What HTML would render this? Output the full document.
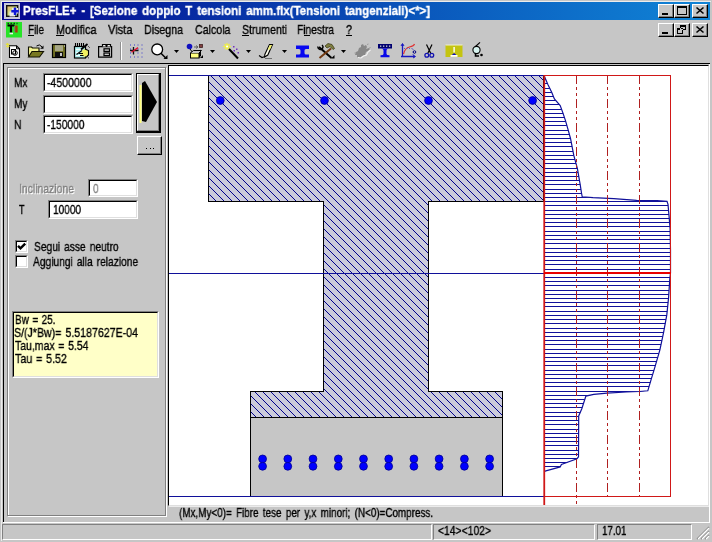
<!DOCTYPE html>
<html><head><meta charset="utf-8"><title>PresFLE+</title>
<style>
html,body{margin:0;padding:0}
body{width:712px;height:542px;position:relative;overflow:hidden;background:#c6c6c6;font-family:"Liberation Sans",sans-serif;font-size:12px}
body>div,body>span,body>svg{position:absolute;box-sizing:border-box}
.t{white-space:nowrap;transform-origin:0 0;display:block;will-change:transform;-webkit-text-stroke:0.35px currentColor}
</style></head><body>
<div style="left:1px;top:1px;width:710px;height:540px;border-left:1px solid #ececec;border-top:1px solid #ececec;"></div>
<div style="left:2px;top:2px;width:708px;height:18px;background:linear-gradient(90deg,#05058e 0%,#0a58bc 60%,#1084d6 100%);"></div>
<span class="t" style="left:23px;top:4.10px;font-size:13px;line-height:13px;font-weight:bold;color:#fff;transform:scaleX(0.8866);word-spacing:1.8px;">PresFLE+ - [Sezione doppio T tensioni amm.flx(Tensioni tangenziali)&lt;*&gt;]</span>
<div style="left:658px;top:4px;width:16px;height:14px;background:#c6c6c6;border-left:1px solid #ffffff;border-top:1px solid #ffffff;border-right:1px solid #000000;border-bottom:1px solid #000000;"></div>
<div style="left:659px;top:5px;width:14px;height:12px;border-right:1px solid #808080;border-bottom:1px solid #808080;"></div>
<div style="left:674px;top:4px;width:16px;height:14px;background:#c6c6c6;border-left:1px solid #ffffff;border-top:1px solid #ffffff;border-right:1px solid #000000;border-bottom:1px solid #000000;"></div>
<div style="left:675px;top:5px;width:14px;height:12px;border-right:1px solid #808080;border-bottom:1px solid #808080;"></div>
<div style="left:692px;top:4px;width:16px;height:14px;background:#c6c6c6;border-left:1px solid #ffffff;border-top:1px solid #ffffff;border-right:1px solid #000000;border-bottom:1px solid #000000;"></div>
<div style="left:693px;top:5px;width:14px;height:12px;border-right:1px solid #808080;border-bottom:1px solid #808080;"></div>
<div style="left:658px;top:23px;width:16px;height:14px;background:#c6c6c6;border-left:1px solid #ffffff;border-top:1px solid #ffffff;border-right:1px solid #000000;border-bottom:1px solid #000000;"></div>
<div style="left:659px;top:24px;width:14px;height:12px;border-right:1px solid #808080;border-bottom:1px solid #808080;"></div>
<div style="left:674px;top:23px;width:16px;height:14px;background:#c6c6c6;border-left:1px solid #ffffff;border-top:1px solid #ffffff;border-right:1px solid #000000;border-bottom:1px solid #000000;"></div>
<div style="left:675px;top:24px;width:14px;height:12px;border-right:1px solid #808080;border-bottom:1px solid #808080;"></div>
<div style="left:692px;top:23px;width:16px;height:14px;background:#c6c6c6;border-left:1px solid #ffffff;border-top:1px solid #ffffff;border-right:1px solid #000000;border-bottom:1px solid #000000;"></div>
<div style="left:693px;top:24px;width:14px;height:12px;border-right:1px solid #808080;border-bottom:1px solid #808080;"></div>
<svg style="left:0;top:0" width="712" height="60" shape-rendering="crispEdges">
<g fill="#000">
<rect x="662" y="13" width="6" height="2"/><rect x="662" y="32" width="6" height="2"/>
<path d="M677 6h10v9h-10z M678 8v6h8v-6z" fill-rule="evenodd"/>
<path d="M680 25h6v5h-6z M681 27v2h4v-2z M677 28h6v6h-6z M678 30v3h4v-3z" fill-rule="evenodd"/>
</g>
<g stroke="#000" stroke-width="1.6" shape-rendering="auto" fill="none">
<path d="M696.5 7.5l7 6M703.5 7.5l-7 6"/><path d="M696.5 26.5l7 6M703.5 26.5l-7 6"/>
</g></svg>
<span class="t" style="left:28px;top:22.90px;font-size:13px;line-height:13px;color:#000;transform:scaleX(0.7636);">File</span>
<span class="t" style="left:56px;top:22.90px;font-size:13px;line-height:13px;color:#000;transform:scaleX(0.8364);">Modifica</span>
<span class="t" style="left:107.5px;top:22.90px;font-size:13px;line-height:13px;color:#000;transform:scaleX(0.8545);">Vista</span>
<span class="t" style="left:143.5px;top:22.90px;font-size:13px;line-height:13px;color:#000;transform:scaleX(0.8173);">Disegna</span>
<span class="t" style="left:194.5px;top:22.90px;font-size:13px;line-height:13px;color:#000;transform:scaleX(0.8184);">Calcola</span>
<span class="t" style="left:241.5px;top:22.90px;font-size:13px;line-height:13px;color:#000;transform:scaleX(0.8088);">Strumenti</span>
<span class="t" style="left:297px;top:22.90px;font-size:13px;line-height:13px;color:#000;transform:scaleX(0.7878);">Finestra</span>
<span class="t" style="left:346px;top:22.90px;font-size:13px;line-height:13px;color:#000;transform:scaleX(0.8294);">?</span>
<div style="left:28px;top:35px;width:6px;height:1px;background:#000000;"></div>
<div style="left:56px;top:35px;width:8px;height:1px;background:#000000;"></div>
<div style="left:241.5px;top:35px;width:7px;height:1px;background:#000000;"></div>
<div style="left:304px;top:35px;width:6px;height:1px;background:#000000;"></div>
<div style="left:346px;top:35px;width:6px;height:1px;background:#000000;"></div>
<div style="left:3px;top:63px;width:707px;height:1px;background:#000000;"></div>
<div style="left:3px;top:63px;width:1px;height:459px;background:#000000;"></div>
<div style="left:709px;top:64px;width:1px;height:459px;background:#ffffff;"></div>
<div style="left:3px;top:522px;width:707px;height:1px;background:#ffffff;"></div>
<div style="left:8px;top:68px;width:159px;height:449px;border:1px solid #ffffff;"></div>
<div style="left:7px;top:67px;width:159px;height:449px;border:1px solid #808080;"></div>
<div style="left:43px;top:73px;width:90px;height:19px;background:#fff;border-left:1px solid #808080;border-top:1px solid #808080;border-right:1px solid #ffffff;border-bottom:1px solid #ffffff;"></div>
<div style="left:44px;top:74px;width:88px;height:17px;border-left:1px solid #000000;border-top:1px solid #000000;border-right:1px solid #dfdfdf;border-bottom:1px solid #dfdfdf;"></div>
<div style="left:43px;top:95px;width:90px;height:19px;background:#fff;border-left:1px solid #808080;border-top:1px solid #808080;border-right:1px solid #ffffff;border-bottom:1px solid #ffffff;"></div>
<div style="left:44px;top:96px;width:88px;height:17px;border-left:1px solid #000000;border-top:1px solid #000000;border-right:1px solid #dfdfdf;border-bottom:1px solid #dfdfdf;"></div>
<div style="left:43px;top:115px;width:90px;height:19px;background:#fff;border-left:1px solid #808080;border-top:1px solid #808080;border-right:1px solid #ffffff;border-bottom:1px solid #ffffff;"></div>
<div style="left:44px;top:116px;width:88px;height:17px;border-left:1px solid #000000;border-top:1px solid #000000;border-right:1px solid #dfdfdf;border-bottom:1px solid #dfdfdf;"></div>
<span class="t" style="left:13.5px;top:76.00px;font-size:13px;line-height:13px;color:#000;transform:scaleX(0.7791);">Mx</span>
<span class="t" style="left:13.5px;top:97.00px;font-size:13px;line-height:13px;color:#000;transform:scaleX(0.7791);">My</span>
<span class="t" style="left:13.5px;top:118.00px;font-size:13px;line-height:13px;color:#000;transform:scaleX(0.7987);">N</span>
<span class="t" style="left:47px;top:76.00px;font-size:13px;line-height:13px;color:#000;transform:scaleX(0.8096);">-4500000</span>
<span class="t" style="left:47px;top:118.00px;font-size:13px;line-height:13px;color:#000;transform:scaleX(0.7856);">-150000</span>
<div style="left:136px;top:73px;width:25px;height:60px;background:#c6c6c6;border:1px solid #000000;border-right-width:2px;border-bottom-width:2px;"></div>
<div style="left:137px;top:74px;width:22px;height:57px;border-left:1px solid #ffffff;border-top:1px solid #ffffff;border-right:1px solid #808080;border-bottom:1px solid #808080;"></div>
<svg style="left:136px;top:73px" width="26" height="60"><path d="M4.5 12V50" stroke="#ffff80" stroke-width="2"/><path d="M6 10L9 8L21 29L10 49L6 48Z" fill="#000"/></svg>
<div style="left:137px;top:136px;width:25px;height:19px;background:#c6c6c6;border-left:1px solid #ffffff;border-top:1px solid #ffffff;border-right:1px solid #000000;border-bottom:1px solid #000000;"></div>
<div style="left:138px;top:137px;width:23px;height:17px;border-right:1px solid #808080;border-bottom:1px solid #808080;"></div>
<div style="left:146px;top:147.5px;width:1.3px;height:1.5px;background:#000000;"></div>
<div style="left:149.5px;top:147.5px;width:1.3px;height:1.5px;background:#000000;"></div>
<div style="left:153px;top:147.5px;width:1.3px;height:1.5px;background:#000000;"></div>
<span class="t" style="left:19.7px;top:182.80px;font-size:13px;line-height:13px;color:#fff;transform:scaleX(0.8007);">Inclinazione</span>
<span class="t" style="left:18.7px;top:181.80px;font-size:13px;line-height:13px;color:#808080;transform:scaleX(0.8007);">Inclinazione</span>
<div style="left:88px;top:179px;width:50px;height:18px;background:#fff;border-left:1px solid #808080;border-top:1px solid #808080;border-right:1px solid #ffffff;border-bottom:1px solid #ffffff;"></div>
<div style="left:89px;top:180px;width:48px;height:16px;border-left:1px solid #000000;border-top:1px solid #000000;border-right:1px solid #dfdfdf;border-bottom:1px solid #dfdfdf;"></div>
<span class="t" style="left:92.5px;top:181.80px;font-size:13px;line-height:13px;color:#808080;transform:scaleX(0.7603);">0</span>
<span class="t" style="left:19px;top:202.60px;font-size:13px;line-height:13px;color:#000;transform:scaleX(0.6929);">T</span>
<div style="left:48px;top:200px;width:90px;height:19px;background:#fff;border-left:1px solid #808080;border-top:1px solid #808080;border-right:1px solid #ffffff;border-bottom:1px solid #ffffff;"></div>
<div style="left:49px;top:201px;width:88px;height:17px;border-left:1px solid #000000;border-top:1px solid #000000;border-right:1px solid #dfdfdf;border-bottom:1px solid #dfdfdf;"></div>
<span class="t" style="left:52.5px;top:202.60px;font-size:13px;line-height:13px;color:#000;transform:scaleX(0.7741);">10000</span>
<div style="left:15px;top:240px;width:13px;height:13px;background:#fff;border-left:1px solid #808080;border-top:1px solid #808080;border-right:1px solid #ffffff;border-bottom:1px solid #ffffff;"></div>
<div style="left:16px;top:241px;width:11px;height:11px;border-left:1px solid #000000;border-top:1px solid #000000;border-right:1px solid #dfdfdf;border-bottom:1px solid #dfdfdf;"></div>
<div style="left:15px;top:255px;width:13px;height:13px;background:#fff;border-left:1px solid #808080;border-top:1px solid #808080;border-right:1px solid #ffffff;border-bottom:1px solid #ffffff;"></div>
<div style="left:16px;top:256px;width:11px;height:11px;border-left:1px solid #000000;border-top:1px solid #000000;border-right:1px solid #dfdfdf;border-bottom:1px solid #dfdfdf;"></div>
<svg style="left:15px;top:240px" width="13" height="13"><path d="M3 5.8L5.5 8.4L10.2 3.6" stroke="#000" stroke-width="2.4" fill="none"/></svg>
<span class="t" style="left:33.5px;top:239.60px;font-size:13px;line-height:13px;color:#000;transform:scaleX(0.7855);word-spacing:1.5px;">Segui asse neutro</span>
<span class="t" style="left:33px;top:254.50px;font-size:13px;line-height:13px;color:#000;transform:scaleX(0.7858);word-spacing:1.5px;">Aggiungi alla relazione</span>
<div style="left:12px;top:311px;width:147px;height:67px;background:#ffffc8;border-left:1px solid #808080;border-top:1px solid #808080;border-right:1px solid #ffffff;border-bottom:1px solid #ffffff;"></div>
<div style="left:13px;top:312px;width:145px;height:65px;border-left:1px solid #000000;border-top:1px solid #000000;border-right:1px solid #dfdfdf;border-bottom:1px solid #dfdfdf;"></div>
<span class="t" style="left:14.6px;top:312.80px;font-size:13px;line-height:13px;color:#000;transform:scaleX(0.7648);word-spacing:1px;">Bw = 25.</span>
<span class="t" style="left:14.3px;top:325.60px;font-size:13px;line-height:13px;color:#000;transform:scaleX(0.8146);word-spacing:1.5px;">S/(J*Bw)= 5.5187627E-04</span>
<span class="t" style="left:14.6px;top:338.60px;font-size:13px;line-height:13px;color:#000;transform:scaleX(0.8053);word-spacing:1px;">Tau,max = 5.54</span>
<span class="t" style="left:14.6px;top:351.50px;font-size:13px;line-height:13px;color:#000;transform:scaleX(0.8242);word-spacing:1px;">Tau = 5.52</span>
<div style="left:168px;top:65px;width:541px;height:441px;background:#fff;border-left:1px solid #000000;border-top:1px solid #000000;border-right:1px solid #dfdfdf;border-bottom:1px solid #dfdfdf;"></div>
<div style="left:169px;top:506px;width:540px;height:1px;background:#ececec;"></div>
<span class="t" style="left:178.6px;top:507.42px;font-size:12.5px;line-height:12.5px;color:#000;transform:scaleX(0.7901);word-spacing:2px;">(Mx,My&lt;0)= Fibre tese per y,x minori; (N&lt;0)=Compress.</span>
<div style="left:2px;top:524px;width:430px;height:16px;border-left:1px solid #808080;border-top:1px solid #808080;border-right:1px solid #ffffff;border-bottom:1px solid #ffffff;"></div>
<div style="left:433px;top:524px;width:162px;height:16px;border-left:1px solid #808080;border-top:1px solid #808080;border-right:1px solid #ffffff;border-bottom:1px solid #ffffff;"></div>
<div style="left:597px;top:524px;width:95px;height:16px;border-left:1px solid #808080;border-top:1px solid #808080;border-right:1px solid #ffffff;border-bottom:1px solid #ffffff;"></div>
<span class="t" style="left:438px;top:524.40px;font-size:13px;line-height:13px;color:#000;transform:scaleX(0.7964);">&lt;14&gt;&lt;102&gt;</span>
<span class="t" style="left:602px;top:524.40px;font-size:13px;line-height:13px;color:#000;transform:scaleX(0.7528);">17.01</span>
<svg style="left:696px;top:526px" width="14" height="14"><g stroke-width="1.2"><path d="M1 13L13 1M5 13L13 5M9 13L13 9" stroke="#808080"/><path d="M2 13L13 2M6 13L13 6M10 13L13 10" stroke="#fff"/></g></svg>
<svg style="left:0;top:0" width="712" height="542">
<defs>
<pattern id="h" width="8" height="8" x="-1" patternUnits="userSpaceOnUse">
<rect width="8" height="8" fill="#cbcbdb"/>
<g fill="#00008c" shape-rendering="crispEdges"><rect x="0" y="0" width="1" height="1"/><rect x="1" y="1" width="1" height="1"/><rect x="2" y="2" width="1" height="1"/><rect x="3" y="3" width="1" height="1"/><rect x="4" y="4" width="1" height="1"/><rect x="5" y="5" width="1" height="1"/><rect x="6" y="6" width="1" height="1"/><rect x="7" y="7" width="1" height="1"/></g>
</pattern>
<clipPath id="c"><polygon points="544,75.4 547.9,84.5 551.8,92.6 554.4,99 560.2,105.5 562.8,112.6 565.4,120.4 568,129.4 570.5,138.5 573.8,155.4 577.4,168.6 580.2,184.7 581.5,193 582.2,196.8 593,197.7 613.8,198.6 636.6,200.3 657,200.7 667,201.3 668,204.4 669.1,216.6 670.1,228.8 670.5,250 670.5,273 669.8,278.7 668.6,297.4 666.8,314.9 663.6,332.3 659.9,349.8 654.9,367.2 651.1,379.7 647.8,390.8 639.4,391.5 626.2,392 607,393.2 593.8,394.4 585.9,396.1 581.8,408.8 578.7,416 578.5,456.8 577,458.7 561.4,464.5 560.2,466.9 545,471.2 544,471.4"/></clipPath>
</defs>
<g shape-rendering="crispEdges">
<rect x="250.5" y="417.5" width="252" height="79" fill="#c6c6c6"/>
<path d="M208.5 75.5H543.5V201.5H428.5V391.5H502.5V417.5H250.5V391.5H323.5V201.5H208.5Z" fill="url(#h)" stroke="#000" stroke-width="1"/>
<path d="M250.5 417.5V496.5M502.5 417.5V496.5" stroke="#000" stroke-width="1"/>
<path d="M169 75.5H544M169 273.5H544M169 496.5H544" stroke="#10109a" stroke-width="1"/>
<g clip-path="url(#c)"><path d="M544 79.5H672M544 83.5H672M544 88.5H672M544 92.5H672M544 96.5H672M544 100.5H672M544 104.5H672M544 109.5H672M544 113.5H672M544 117.5H672M544 121.5H672M544 125.5H672M544 130.5H672M544 134.5H672M544 138.5H672M544 142.5H672M544 146.5H672M544 151.5H672M544 155.5H672M544 159.5H672M544 163.5H672M544 168.5H672M544 172.5H672M544 176.5H672M544 180.5H672M544 184.5H672M544 189.5H672M544 193.5H672M544 197.5H672M544 201.5H672M544 205.5H672M544 210.5H672M544 214.5H672M544 218.5H672M544 222.5H672M544 226.5H672M544 231.5H672M544 235.5H672M544 239.5H672M544 243.5H672M544 248.5H672M544 252.5H672M544 256.5H672M544 260.5H672M544 264.5H672M544 269.5H672M544 273.5H672M544 277.5H672M544 281.5H672M544 285.5H672M544 290.5H672M544 294.5H672M544 298.5H672M544 302.5H672M544 306.5H672M544 311.5H672M544 315.5H672M544 319.5H672M544 323.5H672M544 328.5H672M544 332.5H672M544 336.5H672M544 340.5H672M544 344.5H672M544 349.5H672M544 353.5H672M544 357.5H672M544 361.5H672M544 365.5H672M544 370.5H672M544 374.5H672M544 378.5H672M544 382.5H672M544 386.5H672M544 391.5H672M544 395.5H672M544 399.5H672M544 403.5H672M544 407.5H672M544 412.5H672M544 416.5H672M544 420.5H672M544 424.5H672M544 429.5H672M544 433.5H672M544 437.5H672M544 441.5H672M544 445.5H672M544 450.5H672M544 454.5H672M544 458.5H672M544 462.5H672M544 466.5H672M544 471.5H672" stroke="#10109a" stroke-width="1"/></g>
</g>
<polyline points="544,75.4 547.9,84.5 551.8,92.6 554.4,99 560.2,105.5 562.8,112.6 565.4,120.4 568,129.4 570.5,138.5 573.8,155.4 577.4,168.6 580.2,184.7 581.5,193 582.2,196.8 593,197.7 613.8,198.6 636.6,200.3 657,200.7 667,201.3 668,204.4 669.1,216.6 670.1,228.8 670.5,250 670.5,273 669.8,278.7 668.6,297.4 666.8,314.9 663.6,332.3 659.9,349.8 654.9,367.2 651.1,379.7 647.8,390.8 639.4,391.5 626.2,392 607,393.2 593.8,394.4 585.9,396.1 581.8,408.8 578.7,416 578.5,456.8 577,458.7 561.4,464.5 560.2,466.9 545,471.2 544,471.4" fill="none" stroke="#10109a" stroke-width="1.2"/>
<g shape-rendering="crispEdges">
<path d="M576.5 75V505M607.5 75V496M639.5 75V496" stroke="#b02020" stroke-width="1" stroke-dasharray="9 3 3 3 3 3"/>
<path d="M544.25 75V505" stroke="#d01818" stroke-width="1.8" shape-rendering="auto"/>
<path d="M544 75.5H670.5V496.5H544" stroke="#d01818" stroke-width="1" fill="none"/>
<path d="M544 273H671" stroke="#e80000" stroke-width="2"/>
</g>
<g fill="#0000ff" stroke="#000090" stroke-width="0.8"><circle cx="220.3" cy="100.5" r="3.9"/><circle cx="324.5" cy="100.5" r="3.9"/><circle cx="428.5" cy="100.5" r="3.9"/><circle cx="532.6" cy="100.5" r="3.9"/><circle cx="262.6" cy="458.9" r="3.9"/><circle cx="262.6" cy="466.3" r="3.9"/><circle cx="287.8" cy="458.9" r="3.9"/><circle cx="287.8" cy="466.3" r="3.9"/><circle cx="313.0" cy="458.9" r="3.9"/><circle cx="313.0" cy="466.3" r="3.9"/><circle cx="338.3" cy="458.9" r="3.9"/><circle cx="338.3" cy="466.3" r="3.9"/><circle cx="363.5" cy="458.9" r="3.9"/><circle cx="363.5" cy="466.3" r="3.9"/><circle cx="388.7" cy="458.9" r="3.9"/><circle cx="388.7" cy="466.3" r="3.9"/><circle cx="413.9" cy="458.9" r="3.9"/><circle cx="413.9" cy="466.3" r="3.9"/><circle cx="439.1" cy="458.9" r="3.9"/><circle cx="439.1" cy="466.3" r="3.9"/><circle cx="464.4" cy="458.9" r="3.9"/><circle cx="464.4" cy="466.3" r="3.9"/><circle cx="489.6" cy="458.9" r="3.9"/><circle cx="489.6" cy="466.3" r="3.9"/></g>
</svg>
<svg style="left:0;top:0" width="712" height="62">
<!-- title icon -->
<defs><linearGradient id="ti" x1="0" y1="0" x2="1" y2="1"><stop offset="0" stop-color="#e8b070"/><stop offset="0.5" stop-color="#d0e080"/><stop offset="1" stop-color="#80c0d0"/></linearGradient></defs>
<g>
<rect x="4" y="3" width="16" height="16" fill="#c8c8dc"/>
<rect x="6.7" y="5.700" width="11" height="10.600" fill="url(#ti)" stroke="#101010" stroke-width="1.400"/>
<path d="M9.500 16.500v-5h2.500v-3.500h6v5.500h-3v3z" fill="#e8e8f0"/>
<path d="M11.300 11.200h7.400M15 7.500v7.400" stroke="#1018d8" stroke-width="2.400"/>
</g>
<!-- menu icon -->
<g>
<rect x="6" y="22" width="16" height="15.500" fill="#28e428"/>
<path d="M7.500 23.500h10" stroke="#103010" stroke-width="1.600" stroke-dasharray="1.500 1.500"/>
<path d="M7.500 25.500h7M11 25.500v7" stroke="#000" stroke-width="2.200"/>
<path d="M9.500 33.500h3.500" stroke="#f0f0f0" stroke-width="1.600"/>
<path d="M16.400 25.500v7" stroke="#b03010" stroke-width="2.400"/>
<path d="M14.600 26v6" stroke="#708070" stroke-width="1"/>
</g>
<!-- 1 new -->
<g>
<path d="M9.500 45.800h7l3 3v8.700h-10z" fill="#fff" stroke="#000" stroke-width="1.100"/>
<path d="M16.500 45.800v3h3" fill="none" stroke="#000"/>
<rect x="11.500" y="49.500" width="4" height="4.500" fill="none" stroke="#000"/><circle cx="15" cy="53" r="2.300" fill="none" stroke="#000"/>
<path d="M6 44l3.500 2.500M7.500 43v4.500M6 46.500l3.500-2.500" stroke="#e4e040" stroke-width="1.300"/>
</g>
<!-- 2 open -->
<g>
<path d="M28.500 56.500v-9.500h3l1 1h6.500v4" fill="#f4f490" stroke="#101000" stroke-width="1.100"/>
<path d="M28.500 57l3.500-5.500h11.500l-4 5.500z" fill="#787820" stroke="#101000" stroke-width="1.100"/>
<path d="M36.500 46q3-2.500 5.500 .8" fill="none" stroke="#000" stroke-width="1"/><path d="M43.500 45.500v3.300h-3.300z" fill="#000"/>
</g>
<!-- 3 save -->
<g>
<rect x="52.500" y="44.500" width="13" height="13" fill="#707024" stroke="#000" stroke-width="1.200"/>
<rect x="55" y="45.200" width="8" height="5.800" fill="#a8a888"/>
<rect x="55" y="52" width="8" height="5" fill="#101010"/><rect x="60" y="53" width="2" height="3" fill="#c6c6c6"/>
<rect x="64" y="45.500" width="1" height="1" fill="#f0f0f0"/>
</g>
<!-- 4 notepad+hand -->
<g>
<rect x="74.500" y="46.500" width="11" height="11.500" fill="#b0f0f0" stroke="#000" stroke-width="1.200"/>
<path d="M75.500 43v3.500M77.500 43v3.500M79.500 43v3.500M81.500 43v3.500M83.500 43v3.500" stroke="#000" stroke-width="1.100"/>
<path d="M76 49.500h6M76 52.500h4M76 55.500h5" stroke="#f4ffff" stroke-width="1.200"/>
<path d="M82 50.500l3-1.500l3.500 1.500v4.500l-2 1.500h-3.500l-2.500-1.500z" fill="#f0f060"/>
<path d="M76.500 54.500l5.500-4M79 53.500h4M80 55.500h3.500M85 49l3.500 1.500v4.500l-2 2" stroke="#000" stroke-width="1.100" fill="none"/>
<path d="M81 49.500l6.500-5.500" stroke="#000" stroke-width="1.800"/>
<path d="M88 46l2 2M86 57l3 1" stroke="#202020" stroke-width="1" stroke-dasharray="1 1"/>
</g>
<!-- 5 properties -->
<g fill="none" stroke="#000" stroke-width="1.2">
<path d="M98.6 46.6h13v10.6h-13z" fill="#c8c8c8"/>
<path d="M102.5 46.500v-2h3.500v2M107 46.500v-2h3.500v2" fill="#f0f0f0"/>
<rect x="104" y="48.8" width="5.5" height="2.6"/><rect x="104" y="53" width="5.5" height="2.6"/>
</g>
<!-- separator -->
<path d="M120.5 42v18" stroke="#909090"/><path d="M121.5 42v18" stroke="#fff"/>
<!-- 6 snap -->
<g>
<g fill="#3838d0"><rect x="130" y="44.5" width="1" height="1"/><rect x="130" y="48.5" width="1" height="1"/><rect x="130" y="52.5" width="1" height="1"/><rect x="130" y="56.5" width="1" height="1"/><rect x="134" y="44.5" width="1" height="1"/><rect x="134" y="56.5" width="1" height="1"/><rect x="137.5" y="44.5" width="1" height="1"/><rect x="137.5" y="48.5" width="1" height="1"/><rect x="137.5" y="52.5" width="1" height="1"/><rect x="137.5" y="56.5" width="1" height="1"/><rect x="141.5" y="44.5" width="1" height="1"/><rect x="141.5" y="48.5" width="1" height="1"/><rect x="141.5" y="52.5" width="1" height="1"/><rect x="141.5" y="56.5" width="1" height="1"/></g>
<path d="M130 50.500h8.500M133.500 47v7.500" stroke="#101010" stroke-width="1.300"/>
<path d="M131.500 52.200l6.500-4.600" stroke="#e01030" stroke-width="1.300"/>
</g>
<!-- 7 zoom -->
<g>
<circle cx="157.200" cy="49.400" r="5.400" fill="#fff" stroke="#000" stroke-width="1.300"/>
<path d="M161 53.200l4.500 4.500" stroke="#000" stroke-width="1.500"/><path d="M167.500 55v4h-4z" fill="#000"/>
</g>
<path d="M174.0 50h5l-2.5 3z" fill="#000"/>
<!-- 8 shapes -->
<g>
<circle cx="189.5" cy="46.5" r="2.8" fill="#1010c0"/>
<path d="M190 49l3 4" stroke="#000"/>
<path d="M194 47h4M196 45.5l2 1.5l-2 1.5" stroke="#606060" fill="none"/>
<rect x="199.5" y="44.5" width="3" height="3" fill="#804040" stroke="#402020" stroke-width="0.8"/>
<path d="M199 52.5l2-3v6l-2 3z" fill="#000"/>
<rect x="190.500" y="53" width="8.500" height="5" fill="#ffff80" stroke="#000"/><path d="M190.500 53l3-2.500h8l-2.500 2.500" fill="#c6c6c6" stroke="#000"/>
<path d="M203 55v3h-3z" fill="#000"/>
</g>
<path d="M210.0 50h5l-2.5 3z" fill="#000"/>
<!-- 9 wand -->
<g>
<path d="M223 46.5h8M227 43v7M224.5 44l5 5M229.5 44l-5 5" stroke="#f0f040" stroke-width="1.2"/>
<path d="M227 46.5h0.1" stroke="#fff" stroke-width="2" stroke-linecap="round"/>
<path d="M229 49l9 9.5" stroke="#000" stroke-width="2"/>
<g fill="#7030c0"><rect x="233" y="46" width="1.5" height="1.5"/><rect x="236" y="48.5" width="1.5" height="1.5"/><rect x="233.5" y="50" width="1.5" height="1.5"/><rect x="237.5" y="52" width="1.5" height="1.5"/></g>
</g>
<path d="M246.0 50h5l-2.5 3z" fill="#000"/>
<!-- 10 pencil -->
<g>
<path d="M264.800 54.500l4.700-10h3l-4.700 10.500l-3.200 2z" fill="#fffff0" stroke="#000" stroke-width="1.100"/>
<path d="M269.800 45h2.200l-2 4.500h-2.200z" fill="#f0f070"/>
<path d="M259 55.500l3 2l3-1" stroke="#000" stroke-width="1.200" fill="none"/>
<path d="M265 58.500h7" stroke="#707070"/>
</g>
<path d="M282.0 50h5l-2.5 3z" fill="#000"/>
<!-- 11 I beam -->
<path d="M296 45.5h13v3.5h-3q-1.5 0-1.5 1.5v2.5q0 1.5 1.5 1.5h3v3h-13v-3h3q1.5 0 1.5-1.5v-2.5q0-1.5-1.5-1.5h-3z" fill="#0808f0"/>
<!-- 12 tools -->
<g>
<path d="M319 47l12.5 11" stroke="#000" stroke-width="2"/>
<path d="M318 46.5a2.5 2.5 0 1 0 4-1.5" fill="none" stroke="#000" stroke-width="1.4"/>
<path d="M331 48.5l-11.500 9.5" stroke="#703810" stroke-width="2"/>
<path d="M325 46l3-2.500l4 1l2.500 4l-1.500 1l-3-3l-3 1.500z" fill="#808040" stroke="#303010" stroke-width="0.7"/>
<path d="M334.500 55v3.500h-3.500z" fill="#000"/>
</g>
<path d="M341.0 50h5l-2.5 3z" fill="#000"/>
<!-- 13 disabled -->
<g>
<path d="M355 55l1-3l2-1l1-3l2-1l0-2l2-1l1 2l2-1l1 2l-1 2l3-1l1 1l-2 2l-2 1l-1 3l-3 1l-2 2l-3-1l0-2z" fill="#888"/>
<path d="M358 57.500l3 .5l2.500-2l3-1l1.500-3l2.500-2" stroke="#f4f4f4" fill="none" stroke-width="1.100"/>
<path d="M354.500 53h1.500M367 44.500l1.500-.5M369.500 47.500h1" stroke="#999"/>
</g>
<!-- 14 T section -->
<g>
<rect x="378" y="44" width="14" height="4.5" fill="#000070"/>
<g fill="#d0d0d0"><rect x="380" y="45.500" width="1.300" height="1.300"/><rect x="383" y="45.500" width="1.300" height="1.300"/><rect x="386" y="45.500" width="1.300" height="1.300"/><rect x="389" y="45.500" width="1.300" height="1.300"/></g>
<path d="M381.500 48.500h7q-2 .5-2 2v3.500q0 1.300 3 1.300v2h-9v-2q3 0 3-1.300v-3.500q0-1.500-2-2z" fill="#0808e8"/>
</g>
<!-- 15 graph -->
<g fill="none">
<path d="M402.500 44v13M401 56.500h14" stroke="#1818c0" stroke-width="1.300"/>
<path d="M401 46l1.500-2.500l1.500 2.500M413 55l2.500 1.500l-2.500 1.500" stroke="#1818c0"/>
<path d="M403.500 54q1.500-6 6-7t5-3" stroke="#e03030" stroke-width="1.200"/>
<path d="M404 48.500h9M413 49v6" stroke="#6060c0" stroke-dasharray="1 1.500"/>
<circle cx="414.500" cy="52" r="1.300" stroke="#000080"/>
</g>
<!-- 16 scissors -->
<g fill="none">
<path d="M426.500 44.500l4.300 9M432 44.500l-4.300 9" stroke="#000" stroke-width="1.200"/>
<circle cx="426.800" cy="55.300" r="1.900" stroke="#1010b0" stroke-width="1.300"/><circle cx="431.800" cy="55.300" r="1.900" stroke="#1010b0" stroke-width="1.300"/>
</g>
<!-- 17 yellow -->
<g>
<rect x="445.500" y="45" width="17" height="12" fill="#c4c410"/>
<rect x="445.500" y="44.500" width="17" height="1" fill="#f0f0d0"/>
<rect x="453.400" y="47" width="1.400" height="5.500" fill="#fff"/>
<path d="M452 55q2.100-3.500 4.200 0z" fill="#1010c0"/>
<rect x="450.500" y="55" width="7" height="1.800" fill="#fff"/>
</g>
<!-- 18 magnifier2 -->
<g fill="none">
<circle cx="476.500" cy="50" r="3.600" fill="#d8f4f0" stroke="#000" stroke-width="1.100"/>
<path d="M475.500 46.500l4.500-4.200" stroke="#000" stroke-width="1.100"/>
<path d="M475.500 53.500v2.500h3.500" stroke="#000" stroke-width="1.500"/>
<circle cx="481.500" cy="55" r="1.300" fill="#000"/>
</g>
</svg>
</body></html>
